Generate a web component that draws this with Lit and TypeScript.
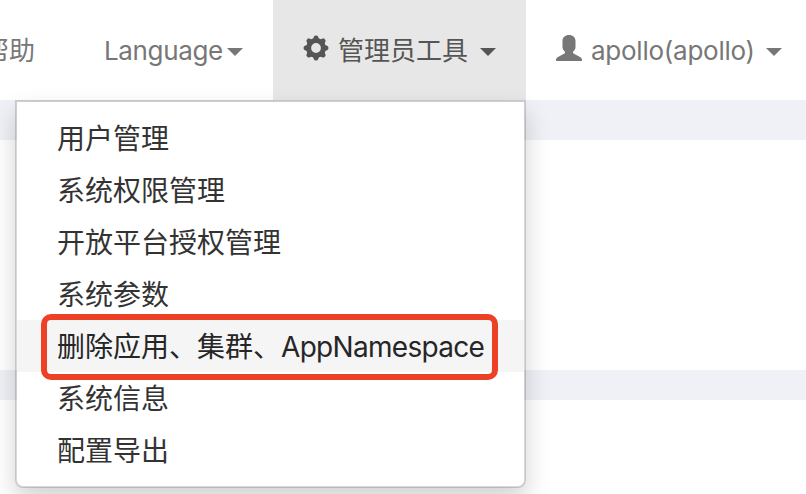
import { LitElement, html, css, svg } from "lit";
import { customElement, property } from "lit/decorators.js";

const gearTeeth = [0, 45, 90, 135, 180, 225, 270, 315];

@customElement("nav-icon")
class NavIcon extends LitElement {
  @property() name = "";

  static styles = css`
    :host { display: block; width: 26px; height: 26px; flex: none; }
    .icon { display: block; fill: currentColor; }
    .hub { fill: none; stroke: currentColor; stroke-width: 5; }
  `;

  render() {
    return html`<svg class="icon" width="26" height="26" viewBox="0 0 26 26">
      ${this.name === "cog"
        ? svg`<circle class="hub" cx="13" cy="13" r="7.4"/>
            ${gearTeeth.map(
              (a) => svg`<path transform="rotate(${a} 13 13)" d="M9.6 5 L11 1.5 Q11.3 .6 13 .5 Q14.7 .6 15 1.5 L16.4 5Z"/>`
            )}`
        : svg`<path d="M13 0C9 0 6.500 2.500 6.500 6v6.500c.2 1.600 1.100 2.900 2.400 4v1.700L2 21.900C.8 22.600 0 23.600 0 25v.4q0 .6.700.6h24.600q.7 0 .7-.6V25c0-1.400-.8-2.400-2-3.100l-6.900-3.700v-1.700c1.300-1.100 2.200-2.400 2.400-4V6C19.500 2.500 17 0 13 0z"/>`}
    </svg>`;
  }
}

@customElement("app-root")
class AppRoot extends LitElement {
  private items = [
    "用户管理",
    "系统权限管理",
    "开放平台授权管理",
    "系统参数",
    "删除应用、集群、AppNamespace",
    "系统信息",
    "配置导出",
  ];

  static styles = css`
    :host {
      display: block;
      position: relative;
      height: 494px;
      overflow: hidden;
      background: #fff;
      font-family: Inter, "Noto Sans CJK SC", sans-serif;
    }
    .page { display: flex; flex-direction: column; height: 100%; }
    .nav {
      display: flex;
      height: 100px;
      flex: none;
      color: #777;
      font-size: 26px;
      line-height: 42px;
      white-space: nowrap;
    }
    .entry {
      display: flex;
      align-items: flex-start;
      box-sizing: border-box;
      flex: none;
      padding: 30px;
    }
    .help { width: 112px; margin-left: -47px; }
    .language { width: 199px; margin-left: 9px; }
    .tools { width: 253px; background: #e7e7e7; color: #555; }
    .user { width: 286px; }
    .entry nav-icon { margin-top: 5px; margin-right: 9px; }
    .latin { letter-spacing: -0.35px; }
    .user .latin { letter-spacing: -0.25px; }
    .caret {
      margin-top: 18px;
      margin-left: auto;
      border-top: 8px solid currentColor;
      border-left: 8px solid transparent;
      border-right: 8px solid transparent;
    }
    .band { flex: none; height: 40px; background: #eff1f6; }
    .panel { flex: none; height: 230px; }
    .band.lower { height: 30px; }
    .menu {
      position: absolute;
      left: 15px;
      top: 100px;
      box-sizing: border-box;
      width: 511px;
      height: 388px;
      margin: 0;
      padding: 10px 0;
      list-style: none;
      background: #fff;
      background-clip: padding-box;
      border: 2px solid rgba(0, 0, 0, 0.15);
      border-radius: 0 0 8px 8px;
      box-shadow: 0 12px 24px rgba(0, 0, 0, 0.175);
      color: #333;
      font-size: 28px;
      line-height: 54px;
      white-space: nowrap;
    }
    .item { height: 52px; padding-left: 40px; position: relative; }
    .item.hovered { background: #f5f5f5; color: #262626; }
    .item .latin { letter-spacing: -0.7px; }
    .mark {
      position: absolute;
      left: 24px;
      top: -6.5px;
      box-sizing: border-box;
      width: 457px;
      height: 66px;
      border: 6px solid #ed4125;
      border-radius: 10px;
    }
  `;

  render() {
    return html`
      <div class="page">
        <nav class="nav">
          <div class="entry help">帮助</div>
          <div class="entry language"><span class="latin">Language</span><i class="caret"></i></div>
          <div class="entry tools"><nav-icon name="cog"></nav-icon><span>管理员工具</span><i class="caret"></i></div>
          <div class="entry user"><nav-icon name="user"></nav-icon><span class="latin">apollo(apollo)</span><i class="caret"></i></div>
        </nav>
        <div class="band"></div>
        <div class="panel"></div>
        <div class="band lower"></div>
      </div>
      <ul class="menu">
        ${this.items.map((label, i) =>
          i === 4
            ? html`<li class="item hovered">删除应用、集群、<span class="latin">AppNamespace</span><span class="mark"></span></li>`
            : html`<li class="item">${label}</li>`
        )}
      </ul>
    `;
  }
}
